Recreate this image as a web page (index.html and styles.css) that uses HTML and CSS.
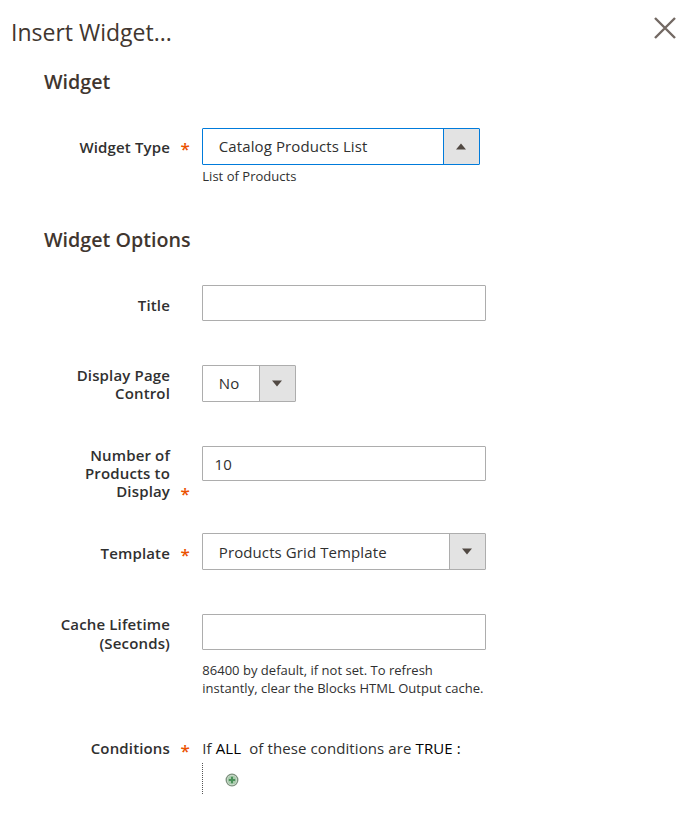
FILE: index.html
```html
<!DOCTYPE html>
<html lang="en">
<head>
<meta charset="utf-8">
<title>Insert Widget</title>
<link rel="stylesheet" href="styles.css">
</head>
<body>
<header class="modal-header">
  <h1>Insert Widget...</h1>
  <svg class="close" width="24" height="24" viewBox="0 0 24 24"><path d="M2 2L22 22M22 2L2 22"/></svg>
</header>
<main>
  <h2 class="first">Widget</h2>
  <div class="row type">
    <div class="label">Widget Type</div><div class="star">*</div>
    <div class="control">
      <div class="select active wide"><span class="value">Catalog Products List</span><span class="arrow"><svg width="10" height="7" viewBox="0 0 10 7"><path d="M0 6.5L5 .5L10 6.5Z"/></svg></span></div>
      <p class="note">List of Products</p>
    </div>
  </div>
  <h2 class="second">Widget Options</h2>
  <div class="row title">
    <div class="label">Title</div><div class="star"></div>
    <div class="control"><div class="input"></div></div>
  </div>
  <div class="row pager">
    <div class="label">Display Page<br>Control</div><div class="star"></div>
    <div class="control"><div class="select small"><span class="value">No</span><span class="arrow"><svg width="10" height="7" viewBox="0 0 10 7"><path d="M0 .5L5 6.5L10 .5Z"/></svg></span></div></div>
  </div>
  <div class="row count">
    <div class="label">Number of<br>Products to<br>Display</div><div class="star">*</div>
    <div class="control"><div class="input short">10</div></div>
  </div>
  <div class="row template">
    <div class="label">Template</div><div class="star">*</div>
    <div class="control"><div class="select"><span class="value">Products Grid Template</span><span class="arrow"><svg width="10" height="7" viewBox="0 0 10 7"><path d="M0 .5L5 6.5L10 .5Z"/></svg></span></div></div>
  </div>
  <div class="row cache">
    <div class="label">Cache Lifetime<br>(Seconds)</div><div class="star"></div>
    <div class="control"><div class="input"></div>
      <p class="note">86400 by default, if not set. To refresh<br>instantly, clear the Blocks HTML Output cache.</p>
    </div>
  </div>
  <div class="row conditions">
    <div class="label">Conditions</div><div class="star">*</div>
    <div class="control">
      <div class="rule"><span>If</span><b class="all">ALL</b><span class="these">of these conditions are</span><b>TRUE</b><b class="colon">:</b></div>
      <div class="branch"><svg width="14" height="14" viewBox="0 0 14 14"><circle class="rim" cx="7" cy="7" r="5.8"/><circle class="disc" cx="7" cy="7" r="4.6"/><path class="plus" d="M7 3.8V10.2M3.8 7H10.2"/></svg></div>
    </div>
  </div>
</main>
</body>
</html>
```
FILE: styles.css
```css
* { box-sizing: border-box; }
body {
  margin: 0;
  width: 685px;
  height: 834px;
  overflow: hidden;
  background: #fff;
  color: #303030;
  font: 15px/18px "Open Sans", "Noto Sans", sans-serif;
  letter-spacing: .1px;
}
h1, h2, p { margin: 0; letter-spacing: 0; }
.modal-header {
  display: flex;
  justify-content: space-between;
  height: 64px;
  padding: 16px 8px 0 11px;
}
h1 { font-size: 23px; font-weight: 400; line-height: 32px; color: #41362f; }
.close { fill: none; stroke: #736963; stroke-width: 2.4; }
h2 {
  padding-left: 44px;
  font-size: 19.7px;
  font-weight: 600;
  line-height: 28px;
  color: #41362f;
}
.first { height: 64px; padding-top: 4px; }
.second { height: 59px; }
.row { display: grid; grid-template-columns: 170px 32px 284px; }
.label { text-align: right; font-weight: 600; letter-spacing: .15px; }
.star {
  align-self: start;
  padding-left: 10.5px;
  color: #eb5202;
  font-size: 17px;
  font-weight: 600;
}
.type { height: 98px; }
.title { height: 80px; }
.pager { height: 81px; }
.count { height: 87px; }
.template { height: 81px; }
.cache { height: 124px; }
.type .label { padding-top: 10px; }
.title .label, .template .label { padding-top: 11px; }
.pager .label, .cache .label { padding-top: 1px; }
.cache .label { line-height: 18.5px; }
.type .star { padding-top: 12px; }
.template .star { padding-top: 13px; }
.count .star { padding-top: 39px; }
.conditions .label { padding-top: 1px; }
.conditions .star { padding-top: 4px; }
.input {
  height: 36px;
  border: 1px solid #adadad;
  border-radius: 1px;
  padding: 8px 11.5px;
}
.short { height: 35px; }
.select {
  display: flex;
  height: 37px;
  border: 1px solid #adadad;
  border-radius: 1px;
}
.value { flex: 1; padding: 8px 0 0 15.8px; white-space: nowrap; }
.template .value { padding-top: 9px; }
.arrow {
  display: flex;
  width: 36px;
  padding-right: 1px;
  align-items: center;
  justify-content: center;
  background: #e3e3e3;
  border-left: 1px solid #adadad;
}
.arrow path { fill: #514943; }
.wide { width: 278px; }
.small { width: 94px; }
.active, .active .arrow { border-color: #007bdb; }
.note { padding-left: .3px; font-size: 13px; line-height: 18px; letter-spacing: .02px; white-space: nowrap; }
.type .note { padding-top: 2px; }
.cache .note { padding-top: 11px; }
.rule { display: flex; height: 25px; padding: 1px 0 0 .3px; white-space: nowrap; }
.rule b { font-weight: 400; color: #000; }
.all { margin-left: 4px; }
.these { margin: 0 4px 0 8px; }
.rule .colon { margin-left: 4px; }
.branch {
  height: 31px;
  padding: 10px 0 0 21.5px;
  border-left: 1px dotted #555;
}
.branch svg { display: block; }
.rim { fill: #dce8dc; stroke: #7d917e; stroke-width: 1.3; }
.disc { fill: #a9cbad; }
.plus { fill: none; stroke: #4a9159; stroke-width: 2; }
```
